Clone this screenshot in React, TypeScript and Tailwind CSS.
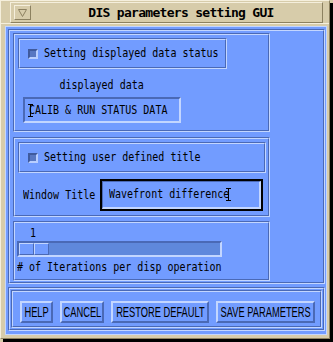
import React from "react";

const etchOut = "border border-t-[#4a69b6] border-l-[#4a69b6] border-b-[#c3d6ff] border-r-[#c3d6ff]";
const etchIn = "border border-t-[#c3d6ff] border-l-[#c3d6ff] border-b-[#4a69b6] border-r-[#4a69b6]";
const sunk = "border-2 border-t-[#4a69b6] border-l-[#4a69b6] border-b-[#c3d6ff] border-r-[#c3d6ff]";
const raised = "border-2 border-t-[#c3d6ff] border-l-[#c3d6ff] border-b-[#4a69b6] border-r-[#4a69b6]";

function Etched({ className = "", inner = "", children }: { className?: string; inner?: string; children?: React.ReactNode }) {
  return (
    <div className={`${etchOut} ${className}`}>
      <div className={`${etchIn} h-full ${inner}`}>{children}</div>
    </div>
  );
}

// narrow X11-style fixed text: 12px mono squeezed to a 6px cell
function Txt({ children, center = false }: { children: React.ReactNode; center?: boolean }) {
  return (
    <span className={`inline-block whitespace-nowrap leading-[13px] scale-x-[0.833] ${center ? "origin-center" : "origin-left"}`}>
      {children}
    </span>
  );
}

function IBeam() {
  return (
    <svg width="5" height="13" viewBox="0 0 5 13">
      <path d="M0 0.5H5M0 12.5H5M2.5 0V13" stroke="#000" strokeWidth="1" />
    </svg>
  );
}

function Toggle({ label, className }: { label: string; className: string }) {
  return (
    <Etched className={className} inner="flex items-center pl-[8px]">
      <div className="w-[10px] h-[10px] shrink-0 border-2 border-t-[#3f5a9e] border-l-[#3f5a9e] border-b-[#b9ceff] border-r-[#b9ceff] bg-[#5877c2]" />
      <div className="ml-[6px] flex">
        <Txt>{label}</Txt>
      </div>
    </Etched>
  );
}

function Btn({ label, w }: { label: string; w: string }) {
  return (
    <div className={`${raised} ${w} h-[22px] flex items-center justify-center overflow-hidden`}>
      <span className="inline-block whitespace-nowrap font-['Liberation_Sans',sans-serif] text-[15px] leading-[16px] scale-x-[0.62]">
        {label}
      </span>
    </div>
  );
}

export default function App() {
  return (
    <div className="w-[333px] h-[342px] bg-[#d7ccaa] font-['DejaVu_Sans_Mono',monospace] text-[12px] leading-[13px] text-black">
      <div className="w-[330px] h-[339px] bg-[#d7ccaa] border border-t-[#f5efdc] border-l-[#f5efdc] border-b-[#8c8160] border-r-[#8c8160] shadow-[3px_3px_0_#000]">
        {/* title bar */}
        <div className="ml-[9px] mt-[1px] w-[313px] h-[21px] flex items-center border border-t-[#f5efdc] border-l-[#f5efdc] border-b-[#8c8160] border-r-[#8c8160]">
          <div className="ml-[3px] w-[17px] h-[15px] flex items-center justify-center border border-t-[#f5efdc] border-l-[#f5efdc] border-b-[#8c8160] border-r-[#8c8160]">
            <svg width="9" height="8" viewBox="0 0 9 8">
              <path d="M0.5 0.5H8.5L4.5 7.5Z" fill="none" stroke="#8c8160" strokeWidth="1" />
            </svg>
          </div>
          <div className="flex-1 pl-[9px] text-center font-bold text-[13px] tracking-[-0.7px] leading-[15px]">
            DIS parameters setting GUI
          </div>
        </div>
        <div className="h-px bg-[#f5efdc]" />

        {/* client area */}
        <div className="ml-[4px] mt-[2px] w-[322px] h-[309px] bg-[#729cff] border border-[#c3d6ff] pl-[2px] pt-[2px]">
          <Etched className="w-[317px] h-[255px]" inner="pl-[3px] pt-[2px]">
            {/* panel 1 */}
            <Etched className="w-[257px] h-[99px]">
              <Toggle label="Setting displayed data status" className="ml-[3px] mt-[3px] w-[209px] h-[31px]" />
              <div className="ml-[8px] mt-[10px] w-[158px] h-[13px] flex justify-center">
                <Txt center>displayed data</Txt>
              </div>
              <div className={`${sunk} relative ml-[8px] mt-[5px] w-[158px] h-[26px] flex items-center pl-[4px]`}>
                <Txt>CALIB &amp; RUN STATUS DATA</Txt>
                <div className="absolute left-[3px] top-[5px] flex">
                  <IBeam />
                </div>
              </div>
            </Etched>

            {/* panel 2 */}
            <Etched className="mt-[5px] w-[257px] h-[80px]">
              <Toggle label="Setting user defined title" className="ml-[3px] mt-[3px] w-[248px] h-[31px]" />
              <div className="ml-[8px] mt-[6px] flex items-center">
                <div className="w-[77px] flex">
                  <Txt>Window Title</Txt>
                </div>
                <div className="relative w-[163px] h-[32px] border-2 border-black">
                  <div className="h-full flex items-center pl-[6px] border-t border-l border-t-[#4a69b6] border-l-[#4a69b6] border-b-2 border-r-2 border-b-[#c3d6ff] border-r-[#c3d6ff]">
                    <Txt>Wavefront difference</Txt>
                  </div>
                  <div className="absolute left-[124px] top-[7px] flex">
                    <IBeam />
                  </div>
                </div>
              </div>
            </Etched>

            {/* panel 3 */}
            <Etched className="mt-[4px] w-[257px] h-[60px]">
              <div className="ml-[15px] mt-[4px] h-[13px] flex">
                <Txt>1</Txt>
              </div>
              <div className={`${sunk} ml-[2px] mt-[1px] w-[205px] h-[16px] bg-[#5f88dc] flex`}>
                <div className="w-[15px] h-full bg-[#729cff] border border-t-[#c3d6ff] border-l-[#c3d6ff] border-b-[#4a69b6] border-r-[#4a69b6]" />
                <div className="w-[15px] h-full bg-[#729cff] border border-t-[#c3d6ff] border-l-[#c3d6ff] border-b-[#4a69b6] border-r-[#4a69b6]" />
              </div>
              <div className="ml-[2px] mt-[4px] h-[13px] flex">
                <Txt># of Iterations per disp operation</Txt>
              </div>
            </Etched>
          </Etched>

          {/* buttons */}
          <Etched className="mt-[3px] w-[317px] h-[44px]">
            <Etched className="m-[1px] h-[38px]" inner="flex items-start pl-[7px] pt-[9px] gap-[7px]">
              <Btn label="HELP" w="w-[33px]" />
              <Btn label="CANCEL" w="w-[44px]" />
              <Btn label="RESTORE DEFAULT" w="w-[98px]" />
              <Btn label="SAVE PARAMETERS" w="w-[99px]" />
            </Etched>
          </Etched>
        </div>
      </div>
    </div>
  );
}
